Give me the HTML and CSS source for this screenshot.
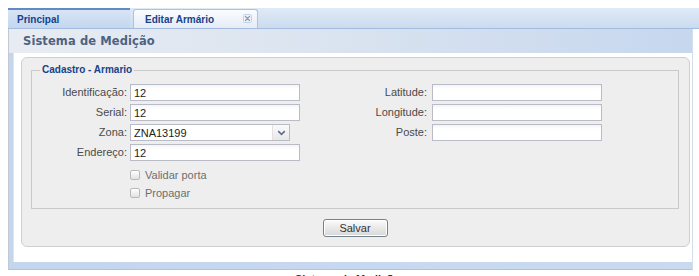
FILE: index.html
```html
<!DOCTYPE html>
<html lang="pt">
<head>
<meta charset="utf-8">
<title>Editar Armário</title>
<link rel="stylesheet" href="styles.css">
</head>
<body>
<div class="page">
  <div class="tabs">
    <div class="tab tab-principal">Principal</div>
    <div class="tab tab-active">
      <span class="tab-text">Editar Armário</span>
      <span class="tab-close">
        <svg width="9" height="9" viewBox="0 0 9 9"><rect x="0.5" y="0.5" width="8" height="8" rx="1" fill="#eef3fa" stroke="#c4d2e6"/><path d="M2.5 2.5 L6.5 6.5 M6.5 2.5 L2.5 6.5" stroke="#8a9bb3" stroke-width="1.2" stroke-linecap="round"/></svg>
      </span>
    </div>
  </div>
  <div class="window">
    <div class="win-header">Sistema de Medição</div>
    <div class="win-body">
      <div class="box">
        <fieldset class="fs">
          <legend class="fs-legend">Cadastro - Armario</legend>
          <div class="cols">
            <div class="col col-left">
              <div class="row"><label class="lbl lbl-left">Identificação:</label><input class="inp" type="text" value="12"></div>
              <div class="row"><label class="lbl lbl-left">Serial:</label><input class="inp" type="text" value="12"></div>
              <div class="row"><label class="lbl lbl-left">Zona:</label>
                <div class="sel"><span class="sel-value">ZNA13199</span><span class="sel-trigger"><svg width="9" height="6" viewBox="0 0 9 6"><path d="M1.2 1.2 L4.5 4.3 L7.8 1.2" fill="none" stroke="#5a6f8f" stroke-width="1.6"/></svg></span></div>
              </div>
              <div class="row"><label class="lbl lbl-left">Endereço:</label><input class="inp" type="text" value="12"></div>
              <div class="checks">
                <div class="check-row"><span class="cb"></span><span class="cb-text">Validar porta</span></div>
                <div class="check-row"><span class="cb"></span><span class="cb-text">Propagar</span></div>
              </div>
            </div>
            <div class="col col-right">
              <div class="row"><label class="lbl lbl-right">Latitude:</label><input class="inp" type="text" value=""></div>
              <div class="row"><label class="lbl lbl-right">Longitude:</label><input class="inp" type="text" value=""></div>
              <div class="row"><label class="lbl lbl-right">Poste:</label><input class="inp" type="text" value=""></div>
            </div>
          </div>
        </fieldset>
        <div class="actions"><button class="btn" type="button">Salvar</button></div>
      </div>
    </div>
  </div>
  <div class="footer-text">Sistema de Medição</div>
</div>
</body>
</html>
```
FILE: styles.css
```css
html, body {
  margin: 0;
  padding: 0;
  overflow: hidden;
  background: #ffffff;
}
body {
  font-family: "Liberation Sans", Arial, sans-serif;
  font-size: 11px;
  color: #333;
}
.page {
  width: 699px;
  padding-top: 8px;
}
.tabs {
  display: flex;
  align-items: flex-end;
  height: 20px;
  margin-left: 8px;
  background: linear-gradient(#e0eaf7, #cbdbef);
  border-bottom: 1px solid #a2bbdf;
}
.tab {
  box-sizing: border-box;
  height: 20px;
  font-weight: bold;
  font-size: 10px;
  color: #15428b;
  display: flex;
  align-items: center;
}
.tab-principal {
  width: 122px;
  padding-left: 9px;
  border-top: 2px solid #6189c4;
  background: linear-gradient(#d7e4f5, #c4d7ef);
}
.tab-active {
  width: 125px;
  height: 19px;
  margin-left: 3px;
  padding-left: 11px;
  padding-right: 5px;
  border: 1px solid #aec2de;
  border-bottom: none;
  border-radius: 3px 3px 0 0;
  background: linear-gradient(#fbfcfe, #e4ecf7);
}
.tab-text {
  flex: 1;
  font-weight: bold;
}
.tab-close {
  display: flex;
  margin-top: -2px;
}
.window {
  width: 685px;
  margin-left: 8px;
  box-sizing: border-box;
  border-left: 1px solid #c3c9d2;
  border-right: 1px solid #d2deee;
  border-bottom: 1px solid #b9c2cc;
  padding-left: 4px;
  padding-bottom: 7px;
  background: linear-gradient(to right, #c4d6ee, #c9daf0);
}
.win-header {
  height: 24px;
  line-height: 24px;
  margin-left: -4px;
  padding-left: 14px;
  font-family: "DejaVu Sans", Verdana, sans-serif;
  font-weight: bold;
  font-size: 11.5px;
  letter-spacing: 0.1px;
  color: #4e6281;
  background: linear-gradient(to right, #e8ecf2, #dbe4f0 45%, #c6d7ee);
}
.win-body {
  background: #ffffff;
  border-left: 1px solid #dbe6f4;
  padding: 4px 2px 15px 7px;
}
.box {
  background: #eeeeee;
  border: 1px solid #cfcfcf;
  border-radius: 6px;
  padding: 6px 10px 9px 9px;
}
.fs {
  margin: 0;
  padding: 8px 0 6px 0;
  border: 1px solid #c9c9c9;
  min-width: 0;
}
.fs-legend {
  margin-left: 8px;
  padding: 0 2px;
  font-weight: bold;
  font-size: 10px;
  line-height: 12px;
  color: #15428b;
}
.cols {
  display: flex;
  align-items: flex-start;
}
.col {
  display: flex;
  flex-direction: column;
  gap: 3px;
}
.col-right {
  margin-left: 40px;
}
.row {
  display: flex;
  align-items: center;
  height: 17px;
}
.lbl {
  text-align: right;
  color: #4a4a4a;
  font-size: 11px;
  line-height: 17px;
}
.lbl-left {
  width: 95px;
  margin-right: 3px;
}
.lbl-right {
  width: 87px;
  margin-right: 5px;
}
.inp {
  box-sizing: border-box;
  width: 170px;
  height: 17px;
  margin: 0;
  padding: 0 3px;
  border: 1px solid #b9bcc6;
  background: linear-gradient(#f4f4f4, #ffffff 4px);
  font-family: "Liberation Sans", Arial, sans-serif;
  font-size: 11px;
  color: #222;
  outline: none;
}
.sel {
  box-sizing: border-box;
  width: 160px;
  height: 17px;
  display: flex;
  align-items: center;
  border: 1px solid #b9bcc6;
  background: #ffffff;
}
.sel-value {
  flex: 1;
  padding-left: 3px;
  color: #222;
  font-size: 11px;
}
.sel-trigger {
  width: 16px;
  height: 15px;
  display: flex;
  align-items: center;
  justify-content: center;
  background: linear-gradient(#fafafa, #e8e8e8);
  border-left: 1px solid #e2e2e2;
}
.checks {
  display: flex;
  flex-direction: column;
  margin-top: 2px;
  padding-left: 98px;
}
.check-row {
  display: flex;
  align-items: center;
  height: 18px;
}
.cb {
  box-sizing: border-box;
  width: 10px;
  height: 10px;
  border: 1px solid #b9b9b9;
  border-radius: 2px;
  background: linear-gradient(#ffffff, #e1e1e1);
  margin-right: 5px;
}
.cb-text {
  color: #6e6e6e;
  font-size: 11px;
}
.actions {
  display: flex;
  justify-content: center;
  margin-top: 10px;
}
.btn {
  box-sizing: border-box;
  width: 65px;
  height: 18px;
  padding: 0;
  border: 1px solid #74818f;
  border-radius: 3px;
  background: linear-gradient(#fbfbfb, #e9e9e9 50%, #d8d8d8);
  font-family: "Liberation Sans", Arial, sans-serif;
  font-size: 11px;
  color: #333;
  box-shadow: inset 0 0 0 1px #ffffff;
}
.footer-text {
  margin-top: 3px;
  text-align: center;
  font-weight: bold;
  font-size: 11px;
  color: #333;
  padding-right: 4px;
}
```
